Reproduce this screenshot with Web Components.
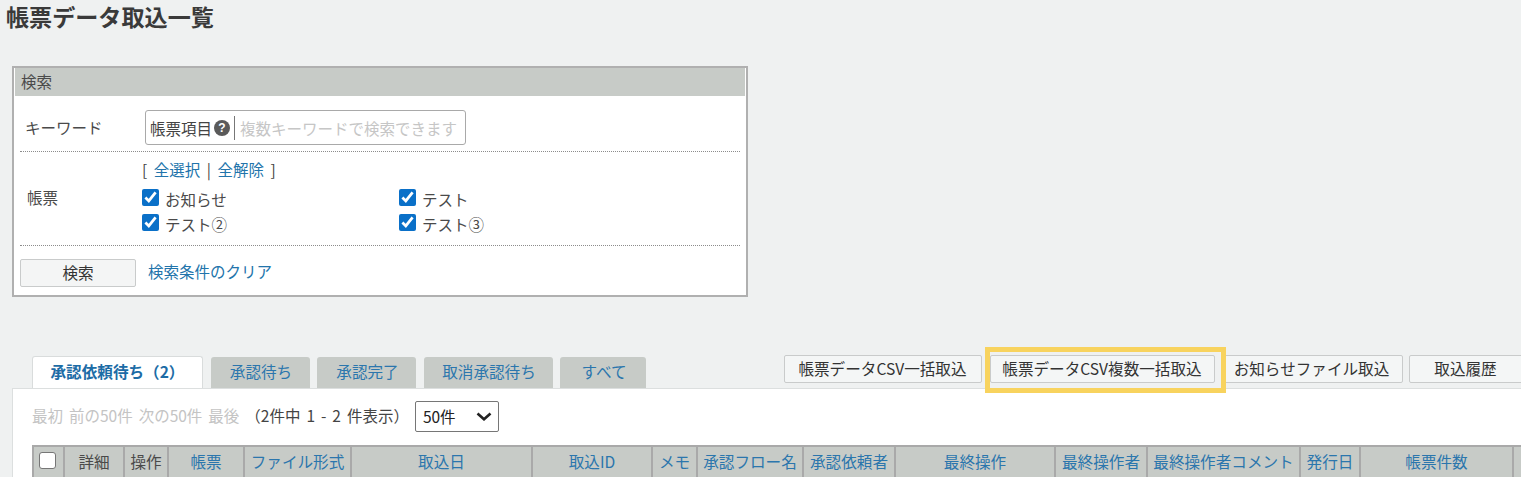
<!DOCTYPE html>
<html lang="ja">
<head>
<meta charset="utf-8">
<title>帳票データ取込一覧</title>
<style>
html,body{margin:0;padding:0;height:477px;overflow:hidden;background:#eff1f1;}
body{font-family:"Noto Sans CJK JP","Noto Sans",sans-serif;font-size:15.5px;color:#3a3a3a;}
</style>
</head>
<body>
<import-page></import-page>

<template id="t-button">
<style>
:host{display:inline-flex;box-sizing:border-box;height:28px;align-items:center;justify-content:center;flex:none;padding-bottom:2px;
 background:#f4f6f6;border:1px solid #c9cbcb;border-radius:2px;color:#333;font-size:15.6px;white-space:nowrap;}
</style><slot></slot>
</template>

<template id="t-check">
<style>
:host{display:flex;align-items:center;gap:6px;height:25px;white-space:nowrap;color:#4a4a4a;}
input{appearance:auto;accent-color:#0a70c8;width:17px;height:17px;margin:0;position:relative;top:-1px;}
</style><input type="checkbox" checked><slot></slot>
</template>

<template id="t-tab">
<style>
:host{display:flex;box-sizing:border-box;align-items:center;justify-content:center;height:31px;flex:none;padding:0 0 3px 2px;
 background:#c7cbc7;color:#2b76ad;border-radius:3px 3px 0 0;font-size:15.6px;white-space:nowrap;}
:host([active]){background:#fff;height:32px;padding-left:0;font-weight:700;color:#1c6ca6;border:1px solid #d9dcdc;border-bottom:0;}
</style><slot></slot>
</template>

<template id="t-row">
<style>
:host{display:grid;grid-template-columns:122px 1fr;align-items:center;margin:0 5px;border-bottom:1px dotted #8c8c8c;}
.l{padding-left:7px;color:#4a4a4a;}
</style><div class="l"><slot name="label"></slot></div><div><slot></slot></div>
</template>

<template id="t-keyword">
<style>
:host{display:flex;box-sizing:border-box;width:321px;height:35px;align-items:center;margin-left:3px;background:#fff;border:1px solid #a9a9a9;border-radius:3px;padding-left:4px;}
.k{color:#444;font-size:15.5px;white-space:nowrap;}
.q{flex:none;width:16px;height:16px;border-radius:50%;background:#5a5a5a;color:#fff;font:700 12px/16px "Liberation Sans",sans-serif;text-align:center;margin:0 4px 0 2px;}
.s{flex:none;width:1px;height:24px;background:#777;margin-right:5px;}
.p{color:#c6c6c6;font-size:15.5px;white-space:nowrap;}
</style><span class="k">帳票項目</span><span class="q">?</span><span class="s"></span><span class="p">複数キーワードで検索できます</span>
</template>

<template id="t-search">
<style>
:host{display:block;box-sizing:border-box;width:736px;height:231px;margin-left:12px;background:#fff;border:2px solid #b0b0b0;padding:0 1px;}
.h{height:28px;line-height:27px;background:#c7cbc7;padding-left:6px;color:#4a4a4a;font-size:15.5px;}
.a{color:#2274ab;}
.sel{height:34px;display:flex;align-items:center;gap:6.5px;color:#444;white-space:pre;}
.grid{display:grid;grid-template-columns:257px 1fr;padding-bottom:9px;}
.foot{display:flex;align-items:flex-start;height:50px;box-sizing:border-box;padding:13px 0 0 5px;gap:12px;}
.foot .a{line-height:25px;}
.foot x-button{width:116px;height:28px;background:#f4f5f5;}
.kw{height:55px;box-sizing:border-box;display:flex;align-items:flex-end;padding-bottom:6px;}
.lk{display:block;padding:6px 0 0;margin-left:-2px;}
.lb{display:block;padding:0 0 4px;}
</style>
<div class="h">検索</div>
<search-row><span slot="label" class="lk">キーワード</span><div class="kw"><keyword-field></keyword-field></div></search-row>
<search-row><span slot="label" class="lb">帳票</span>
 <div class="sel"><span>[</span><span class="a">全選択</span><span>|</span><span class="a">全解除</span><span>]</span></div>
 <div class="grid">
  <check-item>お知らせ</check-item><check-item>テスト</check-item>
  <check-item>テスト②</check-item><check-item>テスト③</check-item>
 </div>
</search-row>
<div class="foot"><x-button>検索</x-button><span class="a">検索条件のクリア</span></div>
</template>

<template id="t-select">
<style>
:host{display:flex;box-sizing:border-box;width:84px;height:31px;align-items:center;justify-content:space-between;background:#fff;border:1px solid #767676;border-radius:2px;padding:0 6px 0 7px;color:#222;white-space:nowrap;}
svg{display:block;}
</style><span>50件</span>
<svg width="16" height="9" viewBox="0 0 16 9" aria-hidden="true"><path d="M1.5 1.5L8 7.3l6.5-5.8" fill="none" stroke="#222" stroke-width="2.6"/></svg>
</template>

<template id="t-grid">
<style>
:host{display:block;margin-left:19px;}
table{border-collapse:separate;border-spacing:0;table-layout:fixed;width:1531px;}
th{box-sizing:border-box;height:32px;padding:0 0 3px;background:#c7cbc7;border-top:2px solid #a9a9a9;border-right:2px solid #a9a9a9;font-weight:400;font-size:15.6px;color:#2b76ad;white-space:nowrap;text-align:center;overflow:hidden;}
th:first-child{border-left:2px solid #a9a9a9;}
th.d{color:#4a4a4a;}
.cb{display:block;box-sizing:border-box;width:17px;height:17px;margin:0 0 0 5px;background:#fff;border:1px solid #767676;border-radius:3px;}
</style>
<table><colgroup>
<col style="width:33px"><col style="width:60px"><col style="width:44px"><col style="width:76px"><col style="width:107px"><col style="width:181px"><col style="width:120px"><col style="width:45px"><col style="width:106px"><col style="width:92px"><col style="width:160px"><col style="width:92px"><col style="width:153px"><col style="width:60px"><col style="width:153px"><col style="width:49px">
</colgroup><thead><tr>
<th><span class="cb"></span></th><th class="d">詳細</th><th class="d">操作</th><th>帳票</th><th>ファイル形式</th><th>取込日</th><th>取込ID</th><th>メモ</th><th>承認フロー名</th><th>承認依頼者</th><th>最終操作</th><th>最終操作者</th><th>最終操作者コメント</th><th>発行日</th><th>帳票件数</th><th></th>
</tr></thead></table>
</template>

<template id="t-list">
<style>
:host{display:block;margin-top:58px;}
.bar{display:flex;align-items:flex-end;height:33px;padding-left:32px;position:relative;z-index:1;}
.tabs{display:flex;gap:7.5px;align-items:flex-end;}
.tools{display:flex;align-self:flex-start;margin-left:137.5px;}
.tools x-button:nth-child(1){width:198px;margin-right:8px;}
.tools x-button:nth-child(3){width:182px;margin-right:6px;}
.tools x-button:nth-child(4){width:114px;}
.mark{position:relative;display:flex;}
.mark::after{content:"";position:absolute;left:-5px;top:-8px;width:241px;height:46px;box-sizing:border-box;border:5px solid #f8d35e;pointer-events:none;}
.panel{margin-left:12px;background:#fff;border-top:1px solid #dcdfdf;border-left:1px solid #dcdfdf;height:90px;}
.pager{display:flex;align-items:center;box-sizing:border-box;height:56px;padding:0 0 2px 19px;white-space:pre;word-spacing:2.5px;}
.off{color:#c4c4c4;position:relative;top:-1px;}
.info{color:#444;margin:0 6px 0 6px;position:relative;top:-1px;}
</style>
<div class="bar">
 <div class="tabs">
  <tab-item active style="width:171px">承認依頼待ち（2）</tab-item>
  <tab-item style="width:99px">承認待ち</tab-item>
  <tab-item style="width:99px">承認完了</tab-item>
  <tab-item style="width:129px">取消承認待ち</tab-item>
  <tab-item style="width:86px">すべて</tab-item>
 </div>
 <div class="tools">
  <x-button>帳票データCSV一括取込</x-button>
  <span class="mark" style="width:225px;margin-right:6px"><x-button style="width:225px;margin:0">帳票データCSV複数一括取込</x-button></span>
  <x-button>お知らせファイル取込</x-button>
  <x-button>取込履歴</x-button>
 </div>
</div>
<div class="panel">
 <div class="pager"><span class="off">最初 前の50件 次の50件 最後</span><span class="info">（2件中 1 - 2 件表示）</span><page-size></page-size></div>
 <data-grid></data-grid>
</div>
</template>

<template id="t-page">
<style>
:host{display:block;width:1521px;height:477px;overflow:hidden;}
h1{margin:0;height:66px;box-sizing:border-box;padding:2px 0 0 6px;line-height:28px;font-weight:700;color:#3a3a3a;font-size:23.1px;}
</style>
<h1>帳票データ取込一覧</h1>
<search-panel></search-panel>
<list-section></list-section>
</template>

<script>
[['x-button','t-button'],['check-item','t-check'],['tab-item','t-tab'],['search-row','t-row'],['keyword-field','t-keyword'],['search-panel','t-search'],['page-size','t-select'],['data-grid','t-grid'],['list-section','t-list'],['import-page','t-page']].forEach(function(p){
  customElements.define(p[0],class extends HTMLElement{
    constructor(){super();this.attachShadow({mode:'open'}).appendChild(document.getElementById(p[1]).content.cloneNode(true));}
  });
});
</script>
</body>
</html>
